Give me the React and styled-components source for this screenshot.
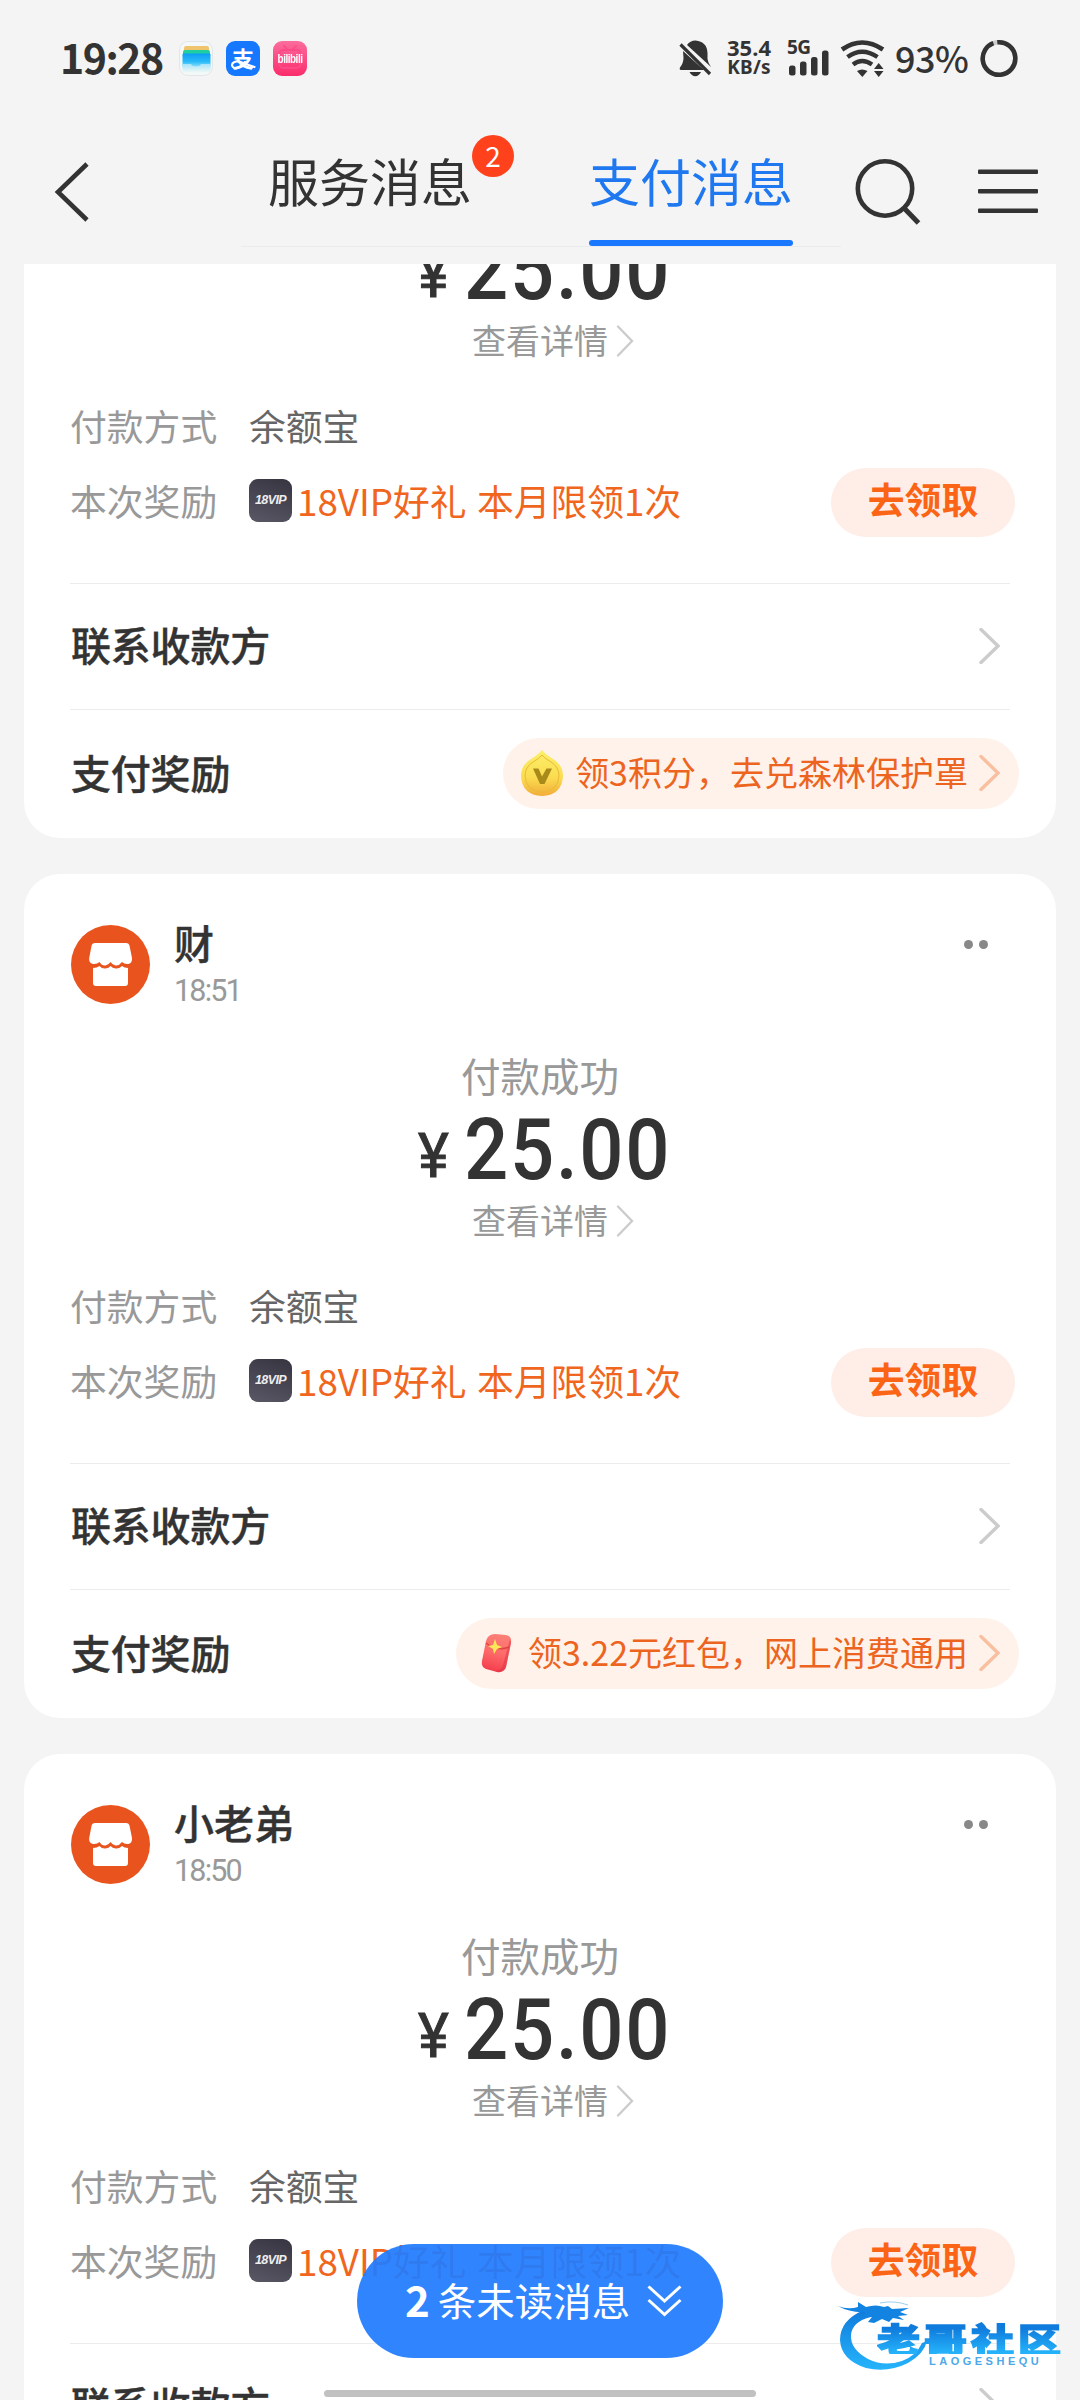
import React from 'react'
import styled, { createGlobalStyle } from 'styled-components'

const GlobalStyle = createGlobalStyle`
  * {
    box-sizing: border-box;
  }
  body {
    margin: 0;
    background: #f4f4f4;
    font-family: "Noto Sans CJK SC", sans-serif;
    color: #333;
  }
  svg {
    display: block;
    flex: none;
  }
`

const Phone = styled.div`
  position: relative;
  display: flex;
  flex-direction: column;
  width: 1080px;
  height: 2400px;
  overflow: hidden;
  background: #f4f4f4;
`

/* ---------- status bar ---------- */

const StatusBar = styled.div`
  display: flex;
  align-items: center;
  height: 116px;
  padding: 0 62px 0 60px;
`

const Clock = styled.div`
  width: 119px;
  margin-top: -4px;
  font-size: 41px;
  font-weight: 700;
  line-height: 60px;
  letter-spacing: -1.5px;
`

const AppIcon = styled.div`
  position: relative;
  display: flex;
  align-items: center;
  justify-content: center;
  width: 34px;
  height: 35px;
  margin-right: 13px;
  border-radius: 9px;
  background: ${props => props.$bg};
  color: white;
  svg {
    position: absolute;
    left: 0;
    top: 0;
  }
`

const PayGlyph = styled.span`
  font-size: 22px;
  font-weight: 700;
  line-height: 34px;
  margin-top: -3px;
`

const BiliGlyph = styled.span`
  font-family: "Liberation Sans", sans-serif;
  font-size: 10px;
  font-weight: 700;
  letter-spacing: -0.5px;
  transform: scaleY(1.35);
`

const StatusRight = styled.div`
  display: flex;
  align-items: center;
  margin-left: auto;
`

const NetSpeed = styled.div`
  width: 54px;
  margin: -3px 11px 0 9px;
  font-family: "Noto Sans", sans-serif;
  font-weight: 700;
  text-align: center;
  font-size: 22px;
  line-height: 20px;
  small {
    display: block;
    font-size: 19px;
    line-height: 20px;
    letter-spacing: 0.2px;
  }
`

const Signal = styled.div`
  width: 42px;
  height: 36px;
  margin-right: 11px;
  font-family: "Noto Sans", sans-serif;
  font-size: 19px;
  font-weight: 700;
  line-height: 14px;
  letter-spacing: -0.5px;
  svg {
    margin-top: -4px;
    margin-left: 2px;
  }
`

const Battery = styled.div`
  width: 76px;
  margin: -3px 9px 0 10px;
  font-size: 36px;
  font-weight: 500;
  line-height: 60px;
  letter-spacing: -0.5px;
`

/* ---------- navigation ---------- */

const NavBar = styled.div`
  display: flex;
  height: 148px;
  padding: 0 42px 0 52px;
`

const NavIcon = styled.div`
  width: ${props => props.$w}px;
  padding-top: ${props => props.$top}px;
`

const Tabs = styled.div`
  display: flex;
  justify-content: space-between;
  width: 600px;
  height: 131px;
  padding: 0 48px 0 27px;
  border-bottom: 1px solid #ebebeb;
`

const Tab = styled.div`
  position: relative;
  height: 130px;
  padding: 29px 0 0;
  font-size: 51px;
  line-height: 70px;
  color: ${props => (props.$active ? '#1f78f0' : '#333')};
`

const TabLine = styled.i`
  position: absolute;
  left: 0;
  right: 0;
  bottom: 0;
  height: 6px;
  border-radius: 3px;
  background: #1a78ff;
`

const Badge = styled.span`
  position: absolute;
  left: 204px;
  top: 19px;
  width: 42px;
  height: 42px;
  border-radius: 50%;
  background: #ff411c;
  color: white;
  font-size: 28px;
  line-height: 41px;
  text-align: center;
`

/* ---------- message list ---------- */

const Feed = styled.div`
  height: 2136px;
  overflow: hidden;
`

const List = styled.div`
  display: flex;
  flex-direction: column;
  gap: 36px;
  margin-top: -270px;
  padding: 0 24px;
`

const Card = styled.div`
  height: 844px;
  flex: none;
  padding: 51px 46px 0;
  border-radius: 36px;
  background: #fff;
`

const CardHead = styled.div`
  display: flex;
  height: 79px;
  margin-bottom: 43px;
  padding-left: 1px;
`

const Shop = styled.div`
  flex: 1;
  margin: -9px 0 0 24px;
`

const ShopName = styled.div`
  font-size: 40px;
  font-weight: 500;
  line-height: 52px;
  -webkit-text-stroke: 0.4px #333;
`

const Time = styled.div`
  font-family: Roboto, sans-serif;
  font-size: 30.5px;
  line-height: 42px;
  letter-spacing: -1.8px;
  color: #999;
  margin-top: 2px;
`

const More = styled.div`
  display: flex;
  gap: 6px;
  padding: 15px 22px 0 0;
  i {
    width: 9px;
    height: 9px;
    border-radius: 50%;
    background: #888;
  }
`

const PayState = styled.div`
  height: 60px;
  text-align: center;
  font-size: 39.5px;
  line-height: 56px;
  color: #999;
`

const Amount = styled.div`
  display: flex;
  justify-content: center;
  height: 84px;
  font-family: Roboto, sans-serif;
  color: #333;
  padding-left: 1px;
`

const Yen = styled.span`
  width: 46px;
  font-size: 61px;
  line-height: 98px;
  transform: scaleX(0.96);
  transform-origin: left;
  -webkit-text-stroke: 1px #333;
`

const Digits = styled.span`
  width: 200px;
  font-size: 86px;
  font-weight: 500;
  line-height: 85px;
  letter-spacing: 1.9px;
  transform: scaleX(0.905);
  transform-origin: left;
  white-space: nowrap;
`

const Detail = styled.div`
  display: flex;
  justify-content: center;
  align-items: center;
  gap: 8px;
  height: 60px;
  margin-bottom: 19px;
  padding-left: 26px;
  font-size: 34px;
  line-height: 60px;
  color: #999;
  span {
    margin-top: -3px;
  }
`

const Row = styled.div`
  display: flex;
  align-items: center;
  height: ${props => props.$h}px;
  font-size: 36.8px;
  color: #666;
`

const Label = styled.div`
  width: 179px;
  margin-top: ${props => (props.$up ? -6 : -4)}px;
  color: #999;
`

const Value = styled.div`
  margin-top: -4px;
`

const VipIcon = styled.div`
  width: 43px;
  height: 43px;
  margin-top: -4px;
  border-radius: 9px;
  background: linear-gradient(200deg, #35343f, #5a5866);
  color: #eee;
  font-family: "Liberation Sans", sans-serif;
  font-size: 12.5px;
  font-style: italic;
  font-weight: 700;
  line-height: 43px;
  letter-spacing: -0.6px;
  text-align: center;
`

const Offer = styled.div`
  flex: 1;
  margin: -6px 0 0 5px;
  color: #f0661e;
  white-space: nowrap;
  word-spacing: 2px;
`

const GetButton = styled.div`
  width: 184px;
  height: 69px;
  margin-right: -5px;
  border-radius: 35px;
  background: #ffeee7;
  color: #fa6414;
  font-weight: 700;
  font-size: 36.8px;
  line-height: 61px;
  text-align: center;
`

const Line = styled.div`
  height: 1px;
  margin-top: ${props => props.$gap || 0}px;
  background: #ececec;
`

const Action = styled.div`
  display: flex;
  justify-content: space-between;
  align-items: center;
  height: ${props => props.$h}px;
  padding: 0 10px 2px 0;
  font-size: 40px;
  font-weight: 500;
  > span {
    margin-top: -3px;
    padding-left: 1px;
    letter-spacing: -0.2px;
    -webkit-text-stroke: 0.4px #333;
  }
`

const RewardPill = styled.div`
  display: flex;
  align-items: center;
  height: 71px;
  margin-right: -19px;
  padding: 0 19px 0 ${props => props.$left}px;
  border-radius: 36px;
  background: #fff2ea;
  color: #ec6420;
  font-size: 34px;
  font-weight: 400;
  p {
    margin: -3px 11px 0 ${props => props.$gap}px;
  }
`

/* ---------- overlays ---------- */

const Unread = styled.div`
  position: absolute;
  left: 357px;
  top: 2244px;
  display: flex;
  align-items: center;
  width: 366px;
  height: 114px;
  padding-left: 48px;
  border-radius: 57px;
  background: rgba(32, 124, 255, 0.93);
  color: white;
  font-size: 38.5px;
  b {
    font-size: 42px;
    margin: -6px 8px 0 0;
  }
  span {
    margin: -5px 17px 0 0;
  }
  svg {
    margin-top: -1px;
  }
`

const HomeBar = styled.div`
  position: absolute;
  left: 324px;
  top: 2390px;
  width: 432px;
  height: 7px;
  border-radius: 4px;
  background: #c1c1c1;
`

const Watermark = styled.div`
  position: absolute;
  left: 836px;
  top: 2298px;
  width: 226px;
  height: 76px;
  svg {
    position: absolute;
    left: 0;
    top: 0;
  }
`

const WmName = styled.div`
  position: absolute;
  left: 41px;
  top: 19px;
  font-size: 43px;
  font-weight: 900;
  line-height: 42px;
  letter-spacing: 4px;
  white-space: nowrap;
  transform: scaleY(0.78);
  background: linear-gradient(#0f7bdc 20%, #25b2fa 95%);
  background-clip: text;
  color: transparent;
  -webkit-text-stroke: 2px transparent;
`

const WmSub = styled.div`
  position: absolute;
  left: 93px;
  top: 57px;
  font-family: "Liberation Sans", sans-serif;
  font-size: 11px;
  font-weight: 700;
  line-height: 13px;
  letter-spacing: 3.5px;
  color: #4fa8e8;
`

const Chevron = ({ w, h, color, sw = 3.4 }) => (
  <svg width={w} height={h} viewBox={`0 0 ${w} ${h}`} fill="none">
    <path d={`M2 1.5 L${w - 2} ${h / 2} L2 ${h - 1.5}`} stroke={color} strokeWidth={sw} strokeLinecap="round" />
  </svg>
)

const Avatar = () => (
  <svg width="79" height="79" viewBox="0 0 79 79">
    <circle cx="39.5" cy="39.5" r="39.5" fill="#e9541e" />
    <path
      d="M24 18 H55 Q58 18 58.6 21 L61 33 Q61.500 38 57.500 39 Q53.500 39.500 51 37 Q48 41 44.500 40.500 Q41.500 40 39.500 37 Q37.500 40 34.500 40.500 Q31 41 28.500 37 Q26 39.500 22 39 Q17.500 38 18.200 33 L20.500 21 Q21 18 24 18 Z"
      fill="#fff"
    />
    <path
      d="M22 43 Q26 43 28.500 41 Q31 44 34.500 43.500 Q38 43 39.500 41 Q41.500 43 44.500 43.500 Q48 44 51 41 Q53.500 43 57 43 V58 Q57 61 54 61 H25 Q22 61 22 58 Z"
      fill="#fff"
    />
  </svg>
)

const Coin = () => (
  <svg width="42" height="46" viewBox="0 0 42 46">
    <defs>
      <linearGradient id="coin" x1="0" y1="0" x2="0" y2="1">
        <stop offset="0" stopColor="#fbf06a" />
        <stop offset="0.6" stopColor="#fbdc50" />
        <stop offset="1" stopColor="#f2ac3a" />
      </linearGradient>
    </defs>
    <path d="M21 0 Q24 4 32 9 Q42 15 42 26 Q41 45 21 46 Q1 45 0 26 Q0 15 10 9 Q18 4 21 0 Z" fill="url(#coin)" />
    <path d="M21 5 Q23 8 30 12 Q38 17 38 26 Q37 41 21 42 Q5 41 4 26 Q4 17 12 12 Q19 8 21 5 Z" fill="none" stroke="#e9b93a" strokeWidth="1" />
    <path d="M12 18.500 H17.500 L21 26.500 L25.500 18.500 H31 L23.500 34 H19 Z" fill="#a88a1a" />
  </svg>
)

const RedPacket = () => (
  <svg width="31" height="40" viewBox="0 0 31 40">
    <defs>
      <linearGradient id="packet" x1="0.6" y1="0" x2="0.4" y2="1">
        <stop offset="0" stopColor="#fb8078" />
        <stop offset="0.5" stopColor="#fd6a6a" />
        <stop offset="1" stopColor="#f43c4c" />
      </linearGradient>
    </defs>
    <path d="M14 1 L25 2 Q31 3 30 10 L25 34 Q23 40 16 39 L5 36 Q0 34 1 28 L5 8 Q7 1 14 1 Z" fill="url(#packet)" />
    <path d="M29 6 L30 10 L25 34 Q23 40 16 39 L14 38 Q21 37 22 32 Z" fill="#dd3040" opacity="0.5" />
    <path d="M5 10 Q16 19 28 14" fill="none" stroke="#e04444" strokeWidth="1.500" />
    <path d="M14 6 L16 12 L21 14 L16 16 L13 21 L12 16 L7 13 L12 12 Z" fill="#ffe75a" />
  </svg>
)

const rewards = {
  coin: { icon: <Coin />, left: 18, gap: 12 },
  packet: { icon: <RedPacket />, left: 25, gap: 16 },
}

const PayCard = ({ name, time, reward, rewardText }) => (
  <Card>
    <CardHead>
      <Avatar />
      <Shop>
        <ShopName>{name}</ShopName>
        <Time>{time}</Time>
      </Shop>
      <More><i /><i /></More>
    </CardHead>
    <PayState>付款成功</PayState>
    <Amount>
      <Yen>¥</Yen>
      <Digits>25.00</Digits>
    </Amount>
    <Detail>
      <span>查看详情</span>
      <Chevron w={18} h={32} color="#ccc" sw={2.4} />
    </Detail>
    <Row $h={74}>
      <Label>付款方式</Label>
      <Value>余额宝</Value>
    </Row>
    <Row $h={77}>
      <Label $up>本次奖励</Label>
      <VipIcon>18VIP</VipIcon>
      <Offer>18VIP好礼 本月限领1次</Offer>
      <GetButton>去领取</GetButton>
    </Row>
    <Line $gap={42} />
    <Action $h={125}>
      <span>联系收款方</span>
      <Chevron w={21} h={36} color="#ccc" />
    </Action>
    <Line />
    <Action $h={128}>
      <span>支付奖励</span>
      <RewardPill $left={rewards[reward].left} $gap={rewards[reward].gap}>
        {rewards[reward].icon}
        <p>{rewardText}</p>
        <Chevron w={21} h={36} color="#f8c0a0" />
      </RewardPill>
    </Action>
  </Card>
)

const messages = [
  { name: '财', time: '18:52', reward: 'coin', rewardText: '领3积分，去兑森林保护罩' },
  { name: '财', time: '18:51', reward: 'packet', rewardText: '领3.22元红包，网上消费通用' },
  { name: '小老弟', time: '18:50', reward: 'coin', rewardText: '领3积分，去兑森林保护罩' },
]

function App() {
  return (
    <Phone>
      <GlobalStyle />
      <StatusBar>
        <Clock>19:28</Clock>
        <AppIcon $bg="#f4f8f8">
          <svg width="34" height="35" viewBox="0 0 34 35">
            <defs>
              <linearGradient id="wallet" x1="0" y1="0" x2="0" y2="1">
                <stop offset="0" stopColor="#0c9cf4" />
                <stop offset="0.6" stopColor="#2cbcf8" />
                <stop offset="1" stopColor="#9fe4fa" />
              </linearGradient>
              <linearGradient id="walletFront" x1="0" y1="0" x2="0" y2="1">
                <stop offset="0" stopColor="#a8e4fb" />
                <stop offset="1" stopColor="#f4faf4" />
              </linearGradient>
            </defs>
            <rect x="5" y="5" width="25" height="8" rx="2" fill="#efc46c" />
            <rect x="4" y="9" width="27" height="8" rx="2" fill="#1fcfa2" />
            <rect x="3.500" y="12.500" width="28" height="14" rx="1" fill="url(#wallet)" />
            <path d="M3.500 23 H12 Q13 25.500 17 25.500 Q21 25.500 22 23 H31.500 V32 H3.500 Z" fill="url(#walletFront)" />
            <rect x="0.5" y="0.5" width="33" height="34" rx="8.500" fill="none" stroke="#e2e6e6" />
          </svg>
        </AppIcon>
        <AppIcon $bg="#1677ff">
          <PayGlyph>支</PayGlyph>
          <svg width="34" height="35" viewBox="0 0 34 35" fill="none">
            <path d="M19 21 Q13 28 8.500 27 Q5 25.500 6.500 22.500 Q9 19 16 21.500 Q22 24 28.500 26" stroke="#fff" strokeWidth="2.200" strokeLinecap="round" />
          </svg>
        </AppIcon>
        <AppIcon $bg="linear-gradient(#fb6d9c, #fb2c6c)">
          <svg width="34" height="35" viewBox="0 0 34 35" fill="none">
            <path d="M11 5 L15 9 M23 5 L19 9" stroke="#f9508a" strokeWidth="2" strokeLinecap="round" />
            <rect x="6.500" y="9" width="21" height="18" rx="4" stroke="#fb4a85" strokeWidth="2" />
          </svg>
          <BiliGlyph>bilibili</BiliGlyph>
        </AppIcon>
        <StatusRight>
          <svg width="34" height="37" viewBox="0 0 34 37">
            <path d="M8 5 Q11 0.500 16.500 0.500 Q28 1.500 28.500 13 V19 Q29 23 32 27 Z" fill="#333" />
            <path d="M4 11 L25 30 H2 Q0 29.500 1 27.500 Q4.500 23 4.500 18 Z" fill="#333" />
            <path d="M1.500 4.500 L31 34" stroke="#333" strokeWidth="3.200" />
            <path d="M10.500 32 H22 Q20 36 16.300 36.300 Q12.500 36 10.500 32 Z" fill="#333" />
          </svg>
          <NetSpeed>35.4<small>KB/s</small></NetSpeed>
          <Signal>
            5G
            <svg width="40" height="26" viewBox="0 0 40 26" fill="#333">
              <rect x="0" y="15.500" width="6.500" height="10" rx="2.500" />
              <rect x="11" y="11.500" width="6.500" height="14" rx="2.500" />
              <rect x="22" y="7" width="6.500" height="18.500" rx="2.500" />
              <rect x="33" y="0.500" width="6.500" height="25" rx="2.500" />
            </svg>
          </Signal>
          <svg width="45" height="37" viewBox="0 0 45 37" fill="none">
            <path d="M2 9.500 Q22 -4.500 43 9.500" stroke="#333" strokeWidth="4.600" />
            <path d="M7.500 17 Q22 6.500 37.500 17" stroke="#333" strokeWidth="4.400" />
            <path d="M13 24.500 Q22 17.500 32 24.500" stroke="#333" strokeWidth="4.400" />
            <path d="M17 31 Q22 28 27.500 31 L22.300 37 Z" fill="#333" />
            <path d="M34 29 L38.700 23 L43.500 29 Z M34 31 H43.500 L38.700 37 Z" fill="#333" />
          </svg>
          <Battery>93%</Battery>
          <svg width="38" height="39" viewBox="0 0 38 39" fill="none">
            <circle cx="19" cy="19.500" r="16.300" stroke="#ccc" strokeWidth="4.600" />
            <circle cx="19" cy="19.500" r="16.300" stroke="#333" strokeWidth="4.600" pathLength="100" strokeDasharray="96 4" transform="rotate(-96 19 19.500)" />
          </svg>
        </StatusRight>
      </StatusBar>

      <NavBar>
        <NavIcon $w={189} $top={46}>
          <svg width="38" height="60" viewBox="0 0 38 60" fill="none">
            <path d="M35 2 L6 30 L35 58" stroke="#333" strokeWidth="4.600" />
          </svg>
        </NavIcon>
        <Tabs>
          <Tab>
            服务消息
            <Badge>2</Badge>
          </Tab>
          <Tab $active>
            支付消息
            <TabLine />
          </Tab>
        </Tabs>
        <NavIcon $w={137} $top={42}>
          <svg width="82" height="68" viewBox="-13 0 82 68" fill="none">
            <circle cx="31" cy="30.500" r="27.200" stroke="#333" strokeWidth="4.600" />
            <path d="M50 50 L64.500 65" stroke="#333" strokeWidth="5" />
          </svg>
        </NavIcon>
        <NavIcon $w={60} $top={53}>
          <svg width="60" height="44" viewBox="0 0 60 44" fill="#333">
            <rect x="0" y="0.500" width="60" height="4.500" rx="1" />
            <rect x="0" y="20" width="60" height="4.500" rx="1" />
            <rect x="0" y="39.500" width="60" height="4.500" rx="1" />
          </svg>
        </NavIcon>
      </NavBar>

      <Feed>
        <List>
          {messages.map((m, i) => <PayCard key={i} {...m} />)}
        </List>
      </Feed>

      <Unread>
        <b>2</b>
        <span>条未读消息</span>
        <svg width="35" height="32" viewBox="0 0 35 32" fill="none" stroke="#fff" strokeWidth="3">
          <path d="M1.500 1.500 L17.500 16 L33.500 1.500" />
          <path d="M1.500 15 L17.500 29.500 L33.500 15" />
        </svg>
      </Unread>
      <HomeBar />
      <Watermark>
        <svg width="226" height="76" viewBox="0 0 226 76" fill="none">
          <defs>
            <linearGradient id="dragon" x1="0" y1="0" x2="0" y2="1">
              <stop offset="0" stopColor="#0f7bdc" />
              <stop offset="1" stopColor="#26b4fb" />
            </linearGradient>
          </defs>
          <path d="M28 12 Q4 22 4 42 Q5 62 30 70 Q52 75 72 65 Q88 56 91 43 L86 45 Q80 58 66 63 Q48 69 32 61 Q14 51 15 37 Q16 24 34 19 Z" fill="url(#dragon)" />
          <path d="M2 8 Q12 12 22 9 L22 4 L30 9 Q40 6 48 9 L52 8 L56 11 L73 10 L64 14 L72 17 L62 18 L68 22 L57 20 L53 24 L46 21 L38 25 L32 24 L36 19 L26 20 L30 14 Q14 15 2 8 Z" fill="#1283e0" />
          <path d="M44 5 Q58 2 72 7" stroke="#9ccff2" strokeWidth="1" />
        </svg>
        <WmName>老哥社区</WmName>
        <WmSub>LAOGESHEQU</WmSub>
      </Watermark>
    </Phone>
  )
}

export default App
